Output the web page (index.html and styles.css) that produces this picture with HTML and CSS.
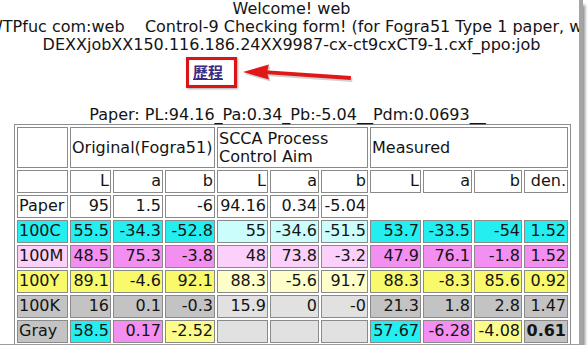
FILE: index.html
```html
<!DOCTYPE html>
<html>
<head>
<meta charset="utf-8">
<link rel="stylesheet" href="styles.css">
</head>
<body>
<div class="window">
  <div class="head">
    <div class="line">Welcome! web</div>
    <div class="line line2">WTPfuc com:web&nbsp;&nbsp;&nbsp; Control-9 Checking form! (for Fogra51 Type 1 paper, with OBA)</div>
    <div class="line">DEXXjobXX150.116.186.24XX9987-cx-ct9cxCT9-1.cxf_ppo:job</div>
  </div>
  <div class="hist-row"><a class="hist" href="#">歷程</a></div>
  <div class="callout"></div>
  <svg class="arrow" width="124" height="28" viewBox="0 0 124 28">
    <g transform="translate(1.5,2)" fill="#9a9a9a" opacity="0.45">
      <polygon points="5,12 31,4.5 29,12 31,19.5"/>
      <polygon points="27,10.2 113,16 112.7,20 27,14"/>
    </g>
    <g fill="#e01818">
      <polygon points="5,12 31,4.5 29,12 31,19.5"/>
      <polygon points="27,10.2 113,16 112.7,20 27,14"/>
    </g>
  </svg>
  <div class="paper">Paper: PL:94.16_Pa:0.34_Pb:-5.04__Pdm:0.0693__</div>
  <table class="grid">
    <tr class="hd">
      <td></td>
      <td colspan="3" class="tl">Original(Fogra51)</td>
      <td colspan="3" class="tl">SCCA Process Control Aim</td>
      <td colspan="4" class="tl">Measured</td>
    </tr>
    <tr>
      <td class="c0"></td><td class="c1">L</td><td class="c2">a</td><td class="c3">b</td>
      <td class="c4">L</td><td class="c5">a</td><td class="c6">b</td>
      <td class="c7">L</td><td class="c8">a</td><td class="c9">b</td><td class="c10">den.</td>
    </tr>
    <tr>
      <td class="tl">Paper</td><td>95</td><td>1.5</td><td>-6</td>
      <td>94.16</td><td>0.34</td><td>-5.04</td>
    </tr>
    <tr>
      <td class="tl cy">100C</td><td class="cy">55.5</td><td class="cy">-34.3</td><td class="cy">-52.8</td>
      <td class="lcy">55</td><td class="lcy">-34.6</td><td class="lcy">-51.5</td>
      <td class="cy">53.7</td><td class="cy">-33.5</td><td class="cy">-54</td><td class="cy">1.52</td>
    </tr>
    <tr>
      <td class="tl lmg">100M</td><td class="mg">48.5</td><td class="mg">75.3</td><td class="mg">-3.8</td>
      <td class="lmg">48</td><td class="lmg">73.8</td><td class="lmg">-3.2</td>
      <td class="mg">47.9</td><td class="mg">76.1</td><td class="mg">-1.8</td><td class="mg">1.52</td>
    </tr>
    <tr>
      <td class="tl ye">100Y</td><td class="ye">89.1</td><td class="ye">-4.6</td><td class="ye">92.1</td>
      <td class="lye">88.3</td><td class="lye">-5.6</td><td class="lye">91.7</td>
      <td class="ye">88.3</td><td class="ye">-8.3</td><td class="ye">85.6</td><td class="ye">0.92</td>
    </tr>
    <tr>
      <td class="tl gy">100K</td><td class="gy">16</td><td class="gy">0.1</td><td class="gy">-0.3</td>
      <td class="lgy">15.9</td><td class="lgy">0</td><td class="lgy">-0</td>
      <td class="gy">21.3</td><td class="gy">1.8</td><td class="gy">2.8</td><td class="gy">1.47</td>
    </tr>
    <tr>
      <td class="tl gy">Gray</td><td class="cy">58.5</td><td class="mg">0.17</td><td class="pye">-2.52</td>
      <td class="lgy"></td><td class="lgy"></td><td class="lgy"></td>
      <td class="cy">57.67</td><td class="mg">-6.28</td><td class="pye">-4.08</td><td class="gy strong">0.61</td>
    </tr>
  </table>
</div>
</body>
</html>
```

FILE: styles.css
```css
html, body {
  margin: 0;
  padding: 0;
  background: #ffffff;
  overflow: hidden;
}

.window {
  position: relative;
  box-sizing: border-box;
  width: 583px;
  height: 345px;
  border-right: 4px solid #a4a4a4;
  border-bottom: 1px solid #9c9c9c;
  box-shadow: 2px 5px 3px rgba(0, 0, 0, 0.45);
  overflow: hidden;
  font-family: "DejaVu Sans", Verdana, sans-serif;
  font-size: 16px;
  color: #141414;
  background: #ffffff;
}

.head {
  display: flex;
  flex-direction: column;
  align-items: center;
  padding-left: 4px;
  padding-top: 0;
  white-space: nowrap;
}

.line {
  line-height: 18px;
}

.line2 {
  align-self: flex-start;
  margin-left: -17px;
}

.hist-row {
  padding-left: 193px;
  padding-top: 8px;
  height: 20px;
  line-height: 20px;
}

.hist {
  font-family: "Noto Sans CJK TC", "Noto Sans CJK SC", sans-serif;
  font-size: 15px;
  font-weight: 700;
  color: #3a2a82;
  text-decoration: underline;
}

.callout {
  position: absolute;
  left: 186px;
  top: 57px;
  width: 45px;
  height: 25px;
  border: 3px solid #d81616;
  box-shadow: 1px 1px 2px rgba(0, 0, 0, 0.35), inset 0 0 1px rgba(200, 0, 0, 0.4);
}

.arrow {
  position: absolute;
  left: 238px;
  top: 60px;
}

.paper {
  margin-top: 23px;
  text-align: center;
  padding-right: 4px;
  line-height: 19px;
  white-space: nowrap;
}

.grid {
  margin-left: 14px;
  margin-top: 0;
  border: 1px solid #8e8e8e;
  border-collapse: separate;
  border-spacing: 2px;
}

.grid td {
  box-sizing: border-box;
  border: 1px solid #8a8a8a;
  padding: 1px 1px 2px 1px;
  line-height: 18px;
  text-align: right;
  white-space: nowrap;
  vertical-align: middle;
}

.grid .hd td {
  white-space: normal;
  padding: 2px 1px 1px 1px;
}

.grid td.tl { text-align: left; }

.c0 { width: 51px; }
.c1 { width: 41px; }
.c2 { width: 50px; }
.c3 { width: 50px; }
.c4 { width: 51px; }
.c5 { width: 49px; }
.c6 { width: 47px; }
.c7 { width: 51px; }
.c8 { width: 49px; }
.c9 { width: 48px; }
.c10 { width: 44px; }

.cy { background: #24eef0; }
.lcy { background: #ccfdfd; }
.mg { background: #f48ff2; }
.lmg { background: #fbd0fa; }
.ye { background: #f9f96c; }
.lye { background: #fefecb; }
.pye { background: #fcfc8c; }
.gy { background: #c3c3c3; }
.lgy { background: #e1e1e1; }

.strong {
  font-weight: 700;
}
```
